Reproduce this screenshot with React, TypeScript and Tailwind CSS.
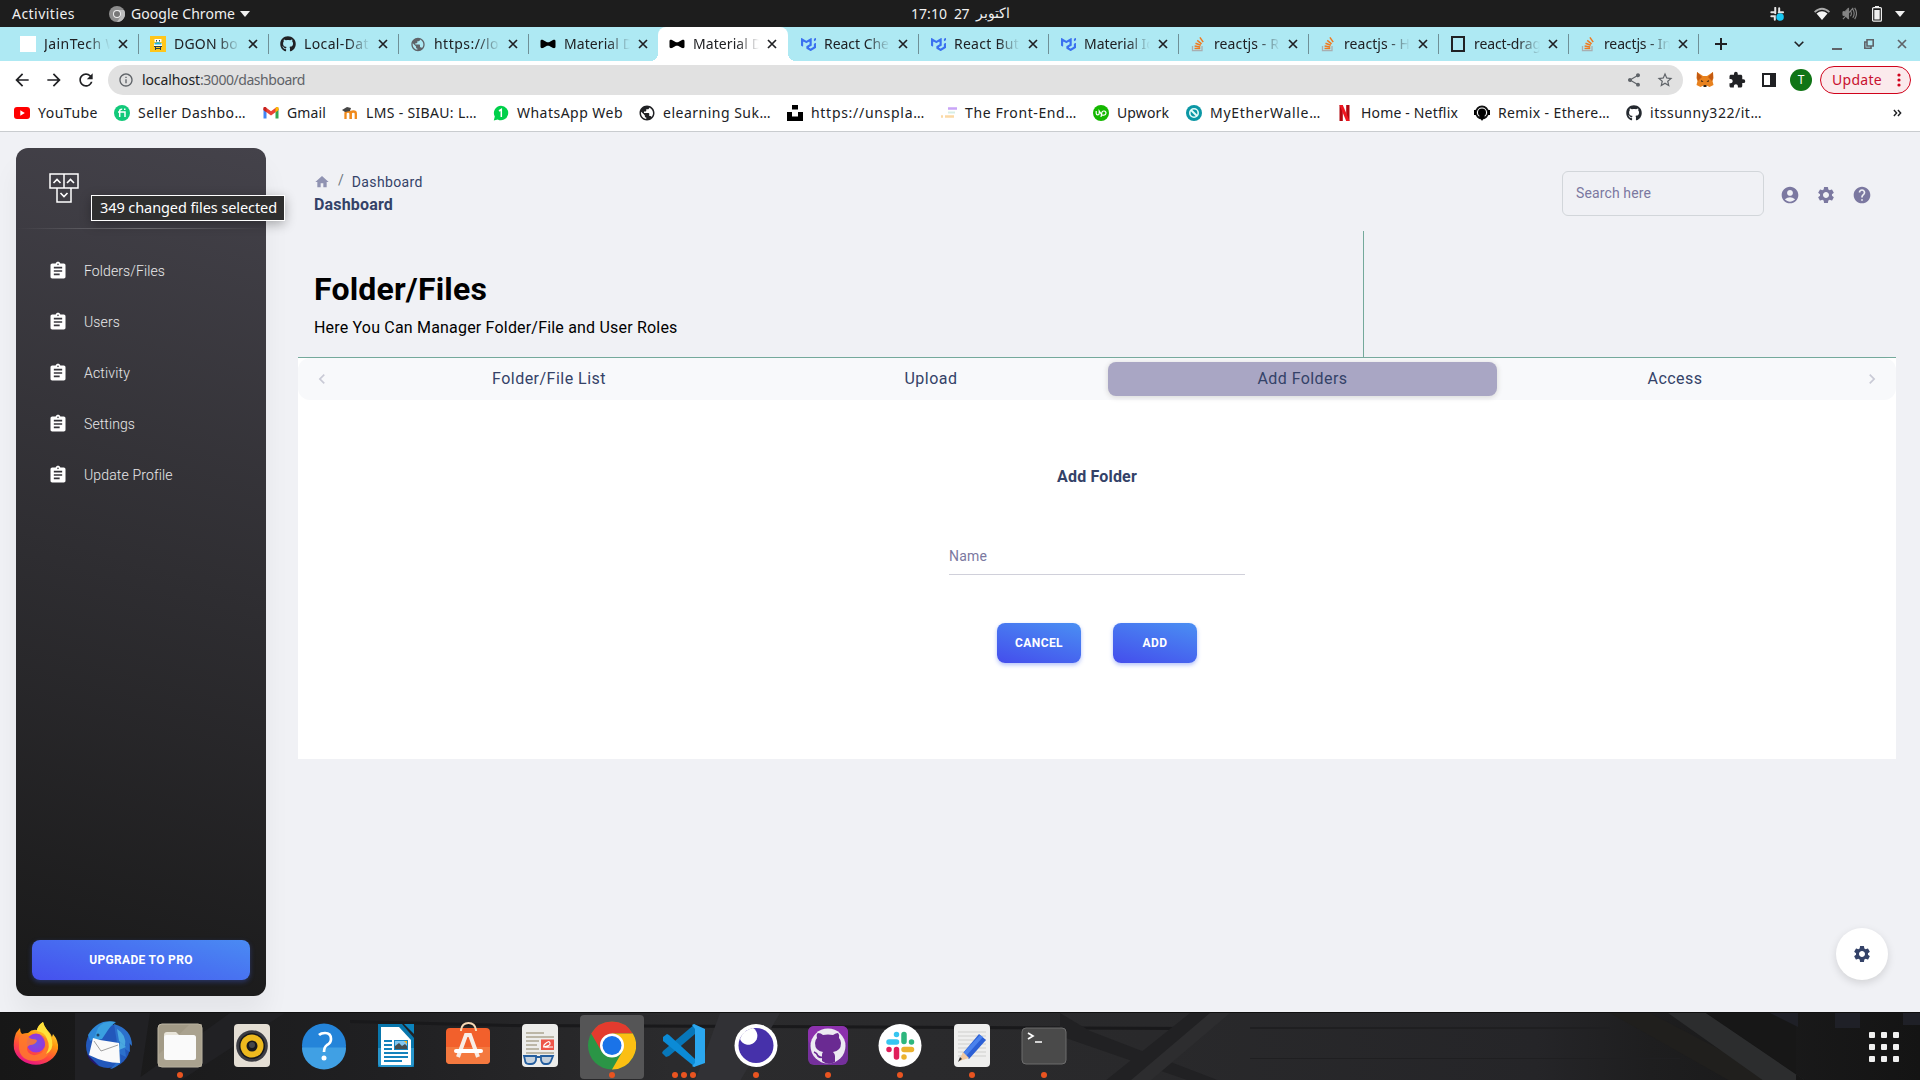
import React, { useLayoutEffect, useRef, useState } from "react";
import {
  MdAssignment, MdHome, MdSettings, MdAccountCircle, MdHelp, MdExtension, MdShare, MdStarBorder,
  MdKeyboardArrowLeft, MdKeyboardArrowRight, MdPublic, MdInfoOutline, MdArrowBack, MdArrowForward, MdRefresh,
} from "react-icons/md";
import { FaGithub } from "react-icons/fa";
import { SiMui } from "react-icons/si";

/** Text spread over a given width by adjusting its letter spacing. */
function Fit({ text, w, className = "" }: { text: string; w: number; className?: string }) {
  const ref = useRef<HTMLSpanElement>(null);
  const [ls, setLs] = useState(0);
  useLayoutEffect(() => {
    const el = ref.current;
    if (el) setLs((w - el.getBoundingClientRect().width) / text.length);
  }, [text, w]);
  return (
    <span ref={ref} className={`inline-block whitespace-pre ${className}`} style={{ letterSpacing: ls }}>
      {text}
    </span>
  );
}

function BowTie() {
  return <svg viewBox="0 0 16 16" className="size-4"><path d="M.5 5.2C.5 4 1.6 3.6 3 4l4 2.2h2L13 4c1.400-.4 2.500 0 2.500 1.200v5.600c0 1.200-1.100 1.600-2.500 1.200L9 9.800H7L3 12c-1.400.4-2.500 0-2.500-1.200z" /></svg>;
}
function MiniGame() {
  return (
    <svg viewBox="0 0 16 16" className="size-4">
      <rect width="16" height="16" fill="#ffc61a" />
      <path d="M4.500 3h7v3h-7z" fill="#fff" /><path d="M4 7h8v3H4z" fill="#fff" /><path d="M4.500 7l3.500-1 3.500 1v1.500h-7z" fill="#27b4d8" /><path d="M6 4h1v1.500H6zM9 4h1v1.500H9zM4 10h8v1H4zM5 12h6v1H5zM5 11h1v3H5zM10 11h1v3h-1z" fill="#26404c" />
    </svg>
  );
}
const Mui = () => <SiMui className="size-[15px] text-[#3a70f0]" />;
const Stack = () => (
  <svg viewBox="0 0 16 16" className="size-4" fill="none">
    <path d="M2.500 10v4.700h9.500V10" stroke="#a9aeb0" strokeWidth="1.300" />
    <path d="M4.500 12.600h5.800M4.600 10.100l5.700.8M5.500 7.200l5.300 2.100M7.200 4.300l4.400 3.500M9.900 1.400l3.300 4.700" stroke="#ee7a20" strokeWidth="1.500" />
  </svg>
);

const tabs: { t: string; w: number; i: React.ReactNode; active?: boolean; sep?: boolean }[] = [
  { t: "JainTech W", w: 75, i: <span className="block size-4 bg-white" />, sep: true },
  { t: "DGON bo", w: 64, i: <MiniGame />, sep: true },
  { t: "Local-Dat", w: 65, i: <FaGithub className="size-4" />, sep: true },
  { t: "https://lo", w: 65, i: <MdPublic className="size-[17px] text-[#5f6368]" />, sep: true },
  { t: "Material D", w: 69, i: <BowTie /> },
  { t: "Material D", w: 69, i: <BowTie />, active: true },
  { t: "React Che", w: 65, i: <Mui />, sep: true },
  { t: "React But", w: 65, i: <Mui />, sep: true },
  { t: "Material Ic", w: 69, i: <Mui />, sep: true },
  { t: "reactjs - R", w: 65, i: <Stack />, sep: true },
  { t: "reactjs - H", w: 66, i: <Stack />, sep: true },
  { t: "react-drag", w: 67, i: <span className="block h-4 w-[14px] border-2 border-[#202124]" />, sep: true },
  { t: "reactjs - In", w: 67, i: <Stack />, sep: true },
];

function Cross({ className = "" }: { className?: string }) {
  return <svg viewBox="0 0 10 10" className={className}><path d="M1 1l8 8M9 1L1 9" stroke="currentColor" strokeWidth="1.700" /></svg>;
}

const bookmarks: { t: string; w: number; gap: number; i: React.ReactNode }[] = [
  { t: "YouTube", w: 60, gap: 16, i: <svg viewBox="0 0 16 16" className="size-4"><rect y="2" width="16" height="12" rx="3" fill="#f00" /><path d="M6.300 5.300v5.400L10.800 8z" fill="#fff" /></svg> },
  { t: "Seller Dashbo…", w: 108, gap: 17, i: <svg viewBox="0 0 16 16" className="size-4"><circle cx="8" cy="8" r="8" fill="#12c97a" /><path d="M4 7h7v5M5.700 12V6q0-2 2.500-1.700M10 4.300h1.500" fill="none" stroke="#fff" strokeWidth="1.500" /></svg> },
  { t: "Gmail", w: 39, gap: 16, i: <svg viewBox="0 0 16 16" className="size-4"><path d="M.5 4v9.500h3V6z" fill="#4285f4" /><path d="M12.500 6v7.500h3V4z" fill="#34a853" /><path d="M.5 3.500C.5 2 2 1.800 3 2.500l5 3.800 5-3.800c1-.7 2.500-.5 2.500 1V5L8 10.500.5 5z" fill="#ea4335" /><path d="M12.500 3l.5-.5c1-.7 2.500-.5 2.500 1V5l-3 2.200z" fill="#fbbc04" /><path d="M3.500 3L3 2.500c-1-.7-2.500-.5-2.500 1V5l3 2.200z" fill="#c5221f" /></svg> },
  { t: "LMS - SIBAU: L…", w: 111, gap: 16, i: <svg viewBox="0 0 16 16" className="size-4"><path d="M3.500 14V8.500q0-2 2.500-2t2.500 2V14M8.800 14V8.500q0-2 2.500-2t2.500 2V14" fill="none" stroke="#f08a1c" strokeWidth="2.300" /><path d="M0 5l5-3 4 1-1 3-5 1z" fill="#464646" /></svg> },
  { t: "WhatsApp Web", w: 106, gap: 16, i: <svg viewBox="0 0 16 16" className="size-4"><path d="M8 .8a7.200 7.200 0 1 1-3.300 13.600L.8 15.400l1-3.800A7.200 7.200 0 0 1 8 .8z" fill="#00d04a" /><path d="M6 6l2.300-1.500V12" stroke="#fff" strokeWidth="1.500" fill="none" /></svg> },
  { t: "elearning Suk…", w: 108, gap: 16, i: <MdPublic className="size-[18px] shrink-0" /> },
  { t: "https://unspla…", w: 114, gap: 16, i: <svg viewBox="0 0 16 16" className="size-4"><path d="M5 0h6v4.500H5zM0 7h5v4.500h6V7h5v9H0z" /></svg> },
  { t: "The Front-End…", w: 112, gap: 16, i: <svg viewBox="0 0 16 16" className="size-4"><path d="M7 3.500h9" stroke="#c9a5f7" strokeWidth="2.500" /><path d="M7 7.500h7" stroke="#d6eee6" strokeWidth="2" /><path d="M4 11.500h9M0 11.500h2" stroke="#fbd9a5" strokeWidth="2.500" /></svg> },
  { t: "Upwork", w: 52, gap: 17, i: <svg viewBox="0 0 16 16" className="size-4"><circle cx="8" cy="8" r="8" fill="#14b800" /><path d="M3.200 6v2.200c0 2.200 3 2.200 3 0V6l2 3q1 1.500 2.600 1.200a2.100 2.100 0 1 0-2-2.500L8 12" fill="none" stroke="#fff" strokeWidth="1.200" /></svg> },
  { t: "MyEtherWalle…", w: 111, gap: 16, i: <svg viewBox="0 0 16 16" className="size-4"><circle cx="8" cy="8" r="8" fill="#0b97a5" /><circle cx="8" cy="8" r="4.200" fill="none" stroke="#e6fbfa" strokeWidth="1.600" /><path d="M5 5l6 6" stroke="#e6fbfa" strokeWidth="2" /></svg> },
  { t: "Home - Netflix", w: 97, gap: 16, i: <svg viewBox="0 0 16 16" className="size-4"><path d="M2.500 0h3.300v16H2.500zM9.200 0h3.300v16H9.200z" fill="#b1060f" /><path d="M2.500 0h3.300l6.700 16H9.200z" fill="#f01620" /></svg> },
  { t: "Remix - Ethere…", w: 112, gap: 16, i: <svg viewBox="0 0 16 16" className="size-4"><circle cx="8" cy="7.500" r="6" fill="none" stroke="#111" strokeWidth="1.800" /><circle cx="8" cy="7.500" r="4" /><path d="M0 5h2v5H0zM14 5h2v5h-2zM5 11h6l-3 5z" /></svg> },
  { t: "itssunny322/it…", w: 112, gap: 0, i: <FaGithub className="size-4 text-[#24292f]" /> },
];

const navItems: [string, number][] = [["Folders/Files", 81], ["Users", 36], ["Activity", 46], ["Settings", 51], ["Update Profile", 88.5]];

function TopBar() {
  return (
    <div className="grid h-[27px] grid-cols-3 items-center bg-[#1d1d1d] text-[14px] text-[#f0f0f0]">
      <div className="flex items-center">
        <Fit text="Activities" w={63} className="ml-3" />
        <svg viewBox="0 0 16 16" className="ml-[34px] size-4">
          <circle cx="8" cy="8" r="8" fill="#8d8d8d" /><path d="M8 4h7A8 8 0 0 1 8 16l4-6z" fill="#bcbcbc" /><circle cx="8" cy="8" r="4" fill="#eee" /><circle cx="8" cy="8" r="3" fill="#777" />
        </svg>
        <Fit text="Google Chrome" w={104} className="ml-[6px]" />
        <svg viewBox="0 0 10 6" className="ml-[5px] h-[6px] w-[10px]"><path d="M0 0h10L5 6z" fill="#f0f0f0" /></svg>
      </div>
      <div className="-mt-px flex items-center justify-center gap-[7px] pl-px">
        <Fit text="17:10" w={36} /><Fit text="27" w={15} /><span className="text-[13.500px]" dir="rtl">اکتوبر</span>
      </div>
      <div className="flex items-center justify-end pr-[15px]">
        <svg viewBox="0 0 16 16" className="mr-[30px] size-[14px]">
          <path d="M6 1v6M1.500 6h4M10.500 1.500v4M10 6h5M1.500 10.500h4v4" stroke="#e4e4e4" strokeWidth="2.300" strokeLinecap="round" fill="none" /><circle cx="11.500" cy="11.500" r="4.300" fill="#19c7f2" />
        </svg>
        <svg viewBox="0 0 16 14" className="mr-[12px] h-[14px] w-4"><path d="M0 4.500Q8-3 16 4.500l-1.200 1.300Q8-.2 1.200 5.800z" fill="#aaa" /><path d="M2.500 6.500Q8 2 13.500 6.500L8 13z" fill="#f4f4f4" /></svg>
        <svg viewBox="0 0 16 16" className="mr-[15px] size-[15px]" fill="none" stroke="#858585"><path d="M1 6h2l4-4v12l-4-4H1z" fill="#858585" /><path d="M9 5q2 3 0 6M11.500 3.500q3 4.500 0 9M13.500 2q4 6 0 12M1 14L12 2" strokeWidth="1.200" /></svg>
        <svg viewBox="0 0 10 16" className="mr-[13px] h-4 w-[10px]"><path d="M3 0h4v2H3z" fill="#eee" /><rect x=".6" y="1.600" width="8.800" height="13.600" rx="1" fill="none" stroke="#eee" strokeWidth="1.200" /><rect x="2.300" y="4" width="5.400" height="9.500" fill="#eee" /></svg>
        <svg viewBox="0 0 10 6" className="h-[6px] w-[10px]"><path d="M0 0h10L5 6z" fill="#f0f0f0" /></svg>
      </div>
    </div>
  );
}

function TabStrip() {
  return (
    <div className="flex h-[34px] bg-[#aee9f3] pl-[9px] text-[14px] text-[#202124]">
      {tabs.map((tab, k) => (
        <div key={k} className={`relative flex h-full w-[130px] shrink-0 items-center pl-[11px] ${tab.active ? "-ml-px mr-px rounded-t-lg bg-white" : ""}`}>
          {tab.active && (
            <>
              <span className="absolute bottom-0 -left-2 size-2 bg-[radial-gradient(circle_at_0_0,transparent_8px,white_8px)]" />
              <span className="absolute -right-2 bottom-0 size-2 bg-[radial-gradient(circle_at_100%_0,transparent_8px,white_8px)]" />
            </>
          )}
          <span className="flex w-4 shrink-0 justify-center">{tab.i}</span>
          <span className="-mt-[2px] ml-2 flex w-[66px] shrink-0 overflow-hidden [mask-image:linear-gradient(to_right,black_66%,transparent)]">
            <Fit text={tab.t} w={tab.w} className="shrink-0" />
          </span>
          <Cross className="ml-2 size-[10px]" />
          {tab.sep && <span className="absolute top-[7px] right-0 h-5 w-px bg-[#6f9097]" />}
        </div>
      ))}
      <div className="flex flex-1 items-center text-[#202124]">
        <svg viewBox="0 0 12 12" className="ml-[16px] size-3"><path d="M6 0v12M0 6h12" stroke="currentColor" strokeWidth="2" /></svg>
        <svg viewBox="0 0 10 6" className="ml-[67px] h-[6px] w-[10px]"><path d="M.7.7L5 5 9.300.7" fill="none" stroke="currentColor" strokeWidth="1.600" /></svg>
        <span className="mt-[9px] ml-[28px] h-[2px] w-[10px] bg-[#5f6368]" />
        <svg viewBox="0 0 10 10" className="ml-[22px] size-[10px]" fill="none" stroke="#5f6368" strokeWidth="1.600"><path d="M3 .8h6.200V7H3zM3 3H.8v6.200H7V7" /></svg>
        <Cross className="ml-[23px] size-[10px] text-[#5f6368]" />
      </div>
    </div>
  );
}

function Toolbar() {
  return (
    <div className="flex h-[38px] items-center bg-white text-[#202124]">
      <MdArrowBack className="ml-3 size-5" />
      <MdArrowForward className="ml-3 size-5" />
      <MdRefresh className="ml-[12px] size-5" />
      <div className="ml-[12px] flex h-[30px] w-[1575px] items-center rounded-full bg-[#e1e1e1] pl-[10px] text-[14px]">
        <MdInfoOutline className="size-4 text-[#5f6368]" />
        <Fit text="localhost" w={58} className="-mt-[2px] ml-2" />
        <Fit text=":3000/dashboard" w={105} className="-mt-[2px] text-[#5f6368]" />
        <MdShare className="ml-auto size-4 text-[#5f6368]" />
        <MdStarBorder className="mr-[9px] ml-[14px] size-[18px] text-[#5f6368]" />
      </div>
      <svg viewBox="0 0 18 16" className="ml-[13px] h-4 w-[18px]">
        <path d="M1 0l6 4h4l6-4 .5 6-1 3 1 4-4 2-3-1.500H7.500L4.500 15l-4-2 1-4-1-3z" fill="#e8821e" /><path d="M1 0l5 5-4 4-1-3zM17 0l-5 5 4 4 1-3z" fill="#c35a12" /><path d="M5 8l2.500 1.500-2 .5zM13 8l-2.500 1.500 2 .5zM7.500 13h3v2h-3z" fill="#2c2014" />
      </svg>
      <MdExtension className="ml-[14px] size-[18px]" />
      <svg viewBox="0 0 14 14" className="ml-[16px] size-[14px]"><path d="M0 0h14v14H0zM2 2v10h6V2z" fillRule="evenodd" fill="#202124" /></svg>
      <span className="ml-[14px] flex size-[22px] items-center justify-center rounded-full bg-[#107516] text-[12px] text-white">T</span>
      <div className="ml-[8px] flex h-[28px] w-[91px] items-center rounded-full border border-[#d0021b] bg-[#fbeaec] pl-[11px] text-[14px] text-[#c8102e]">
        <Fit text="Update" w={50} className="-mt-px" />
        <svg viewBox="0 0 4 16" className="ml-[15px] h-4 w-1" fill="#d0021b"><circle cx="2" cy="3" r="1.600" /><circle cx="2" cy="8" r="1.600" /><circle cx="2" cy="13" r="1.600" /></svg>
      </div>
    </div>
  );
}

function Bookmarks() {
  return (
    <div className="flex h-[33px] items-center border-b border-[#c9cccf] bg-white pb-[5px] pl-[14px] text-[14px] text-[#202124]">
      {bookmarks.map((b) => (
        <div key={b.t} className="flex shrink-0 items-center">
          <span className="flex w-4 shrink-0 justify-center">{b.i}</span>
          <Fit text={b.t} w={b.w} className="-mt-px ml-2" />
          <span className="shrink-0" style={{ width: b.gap }} />
        </div>
      ))}
      <svg viewBox="0 0 10 8" className="mr-[18px] ml-auto h-2 w-[9px]" fill="none" stroke="#202124" strokeWidth="1.600"><path d="M1 .7L4 4 1 7.300M5.500.7l3 3.300-3 3.300" /></svg>
    </div>
  );
}

function Sidebar() {
  return (
    <aside className="relative ml-4 mt-4 flex h-[848px] w-[250px] shrink-0 flex-col rounded-xl bg-[linear-gradient(195deg,#44424a,#191919)] shadow-[0_20px_27px_0_rgba(0,0,0,0.05)]">
      <svg viewBox="0 0 30 30" className="mt-[25px] ml-[33px] size-[30px]" fill="none" stroke="#fff" strokeWidth="1.500">
        <path d="M1 1h14v14H1zM15 1h14v14H15zM8 15h14v14H8z" /><path d="M4.500 10l3.500-3.500 3.500 3.500M18 10l3.500-3.500 3.500 3.500M11.500 20l3.500 3.500 3.500-3.500" strokeWidth="1.600" />
      </svg>
      <div className="mt-[25px] h-px bg-[linear-gradient(to_right,transparent,rgba(255,255,255,0.28),transparent)]" />
      <nav className="mt-[17px] flex flex-col">
        {navItems.map(([t, w]) => (
          <div key={t} className="flex h-[51px] items-center pl-8">
            <MdAssignment className="-mt-px size-5 text-white" />
            <Fit text={t} w={w} className="ml-4 font-['Roboto'] text-[14px] font-light text-white/90" />
          </div>
        ))}
      </nav>
      <button className="mx-4 mt-auto mb-4 h-10 rounded-lg bg-[linear-gradient(195deg,#4a8bf3,#4550ee)] text-[12px] font-bold text-white shadow-[0_2px_5px_rgba(66,100,240,0.35)]">
        <Fit text="UPGRADE TO PRO" w={103.5} />
      </button>
      <div className="absolute top-[47px] left-[75px] flex h-[26px] w-[194px] items-center justify-center border border-white bg-[#2f2f2f] font-['Noto_Sans'] text-[14.500px] text-white shadow-[0_3px_12px_rgba(0,0,0,0.3)]">
        <Fit text="349 changed files selected" w={178} className="pl-px" />
      </div>
    </aside>
  );
}

function GradButton({ t, w }: { t: string; w: number }) {
  return (
    <button className="h-10 w-[84px] rounded-lg bg-[linear-gradient(195deg,#4a8ff3,#444dec)] text-[12px] font-bold text-white shadow-[0_2px_4px_rgba(66,100,240,0.4)]">
      <Fit text={t} w={w} />
    </button>
  );
}

function Main() {
  return (
    <main className="ml-8 flex w-[1598px] shrink-0 flex-col">
      <div className="flex h-[99px]">
        <div className="pt-[38px] pl-4">
          <div className="flex h-6 items-center text-[#344268]">
            <MdHome className="-mt-px size-4 text-[#9093b2]" />
            <span className="ml-[8px] -mt-1 text-[14px] text-[#6c757d]">/</span>
            <Fit text="Dashboard" w={71} className="ml-[8px] text-[14px]" />
          </div>
          <div className="-mt-px text-[16px] leading-6 font-bold text-[#344268]"><Fit text="Dashboard" w={79} /></div>
        </div>
        <div className="ml-auto flex items-start pt-[39px] pr-[24px] text-[#7b78a0]">
          <div className="flex h-[45px] w-[202px] items-center rounded-md border border-[#d2d6da] pl-[13px] text-[14px]"><Fit text="Search here" w={75} /></div>
          <MdAccountCircle className="mt-[14px] ml-4 size-5" />
          <MdSettings className="mt-[14px] ml-4 size-5" />
          <MdHelp className="mt-[14px] ml-4 size-5" />
        </div>
      </div>
      <div className="flex h-[127px] border-b border-[#74a99b] text-black">
        <div className="w-[1066px] border-r border-[#74a99b] pt-[38px] pl-4">
          <div className="text-[32px] leading-10 font-bold"><Fit text="Folder/Files" w={173} /></div>
          <div className="mt-[7px] text-[16px] leading-6"><Fit text="Here You Can Manager Folder/File and User Roles" w={363.5} /></div>
        </div>
      </div>
      <section className="h-[401px] bg-white text-[#344268]">
        <div className="flex h-[42px] items-center rounded-xl bg-[#f8f9fb] text-[16px]">
          <MdKeyboardArrowLeft className="ml-[14px] size-5 text-[#c9cad6]" />
          <div className="ml-[23px] flex w-[388px] justify-center"><Fit text="Folder/File List" w={114} /></div>
          <div className="flex w-[365px] justify-center"><Fit text="Upload" w={53} className="ml-[11px]" /></div>
          <div className="-mt-px flex h-[34px] w-[389px] items-center justify-center rounded-lg bg-[#a9a6c4] shadow-[0_1px_5px_1px_#ddd]"><Fit text="Add Folders" w={90} /></div>
          <div className="flex w-[356px] justify-center"><Fit text="Access" w={55} /></div>
          <MdKeyboardArrowRight className="mr-[14px] ml-auto size-5 text-[#c9cad6]" />
        </div>
        <div className="flex flex-col items-center">
          <h2 className="mt-[65px] text-[16px] leading-6 font-bold"><Fit text="Add Folder" w={80} /></h2>
          <div className="mt-[55px] flex h-[31px] w-[296px] items-start border-b border-[#d0d0da] text-[14px] text-[#7b78a0]"><Fit text="Name" w={38} className="leading-6" /></div>
          <div className="mt-[48px] flex gap-8"><GradButton t="CANCEL" w={48} /><GradButton t="ADD" w={25} /></div>
        </div>
      </section>
      <div className="mt-auto mr-2 mb-8 flex size-[52px] items-center justify-center self-end rounded-full bg-white shadow-[0_3px_8px_rgba(0,0,0,0.13)]">
        <MdSettings className="size-5 text-[#344268]" />
      </div>
    </main>
  );
}

const dock: { n: number; active?: boolean; i: React.ReactNode }[] = [
  { n: 0, i: <>
    <defs>
      <linearGradient id="fx" x1=".8" y1="0" x2=".3" y2="1"><stop offset="0" stopColor="#fff44f" /><stop offset=".4" stopColor="#ff980e" /><stop offset=".7" stopColor="#ff4a3d" /><stop offset="1" stopColor="#e5108c" /></linearGradient>
      <radialGradient id="fxp"><stop offset="0" stopColor="#6a55e8" /><stop offset="1" stopColor="#9a35d8" /></radialGradient>
    </defs>
    <path d="M4 12l4-5q0 4 2 6 3-1 6-1 4-4 9-3Q26 4 31 1q1 5 6 10 2 2 3 5l1-3q6 7 5 15a22.500 20 0 0 1-44 0q-1-8 2-16z" fill="url(#fx)" />
    <circle cx="24" cy="22" r="9.500" fill="url(#fxp)" />
    <path d="M7 17q3-4 8-4 1 4 5 5 5 0 5 2-2 4-7 4-5 2-2 7 4 5 11 2 6-2 6-9 0-7-5-10 9 2 10 11 0 14-15 15Q9 40 7 28z" fill="#ff7a2c" opacity=".85" />
    <path d="M31 1q-6 4-6 9 8 1 10 8 4 8-1 15 8-4 6-14-2-6-5-10-3-4-4-8z" fill="#ffe03a" /></> },
  { n: 0, i: <>
    <circle cx="24" cy="25" r="22" fill="#2258bb" /><path d="M4 14Q14-3 32 1L16 15 6 20z" fill="#2d88d8" /><path d="M30 3q18 5 18 22l-3-3 1 9-5-3 1 8-6-3 1 8q-6 7-11 7 8-6 9-14z" fill="#2b70cc" /><path d="M33 8q10 6 8 17l-6-5zM36 21l6 5-7 3z" fill="#4aa8e0" /><path d="M14 7Q20-1 31 1q-5 4-7 8l-6 9-9 2z" fill="#3aa0e0" /><path d="M9 17l7 2 19 3 1 20q-15 0-31-8z" fill="#fafafa" /><path d="M10 20l7 10 17-6" fill="none" stroke="#888" strokeWidth=".8" /><path d="M3 33l12 12q-10-4-12-12z" fill="#23156a" /><circle cx="14" cy="14" r="1.500" fill="#246" /></> },
  { n: 1, i: <><rect x="2" y="3" width="44" height="43" rx="4" fill="#a29a86" stroke="#bdb6a3" /><path d="M2 34L34 3h12v43H2z" fill="#b2aa97" opacity=".5" /><path d="M8 14q0-3 3-3h9l4 4v6H8z" fill="#e8e4d9" /><rect x="8" y="14" width="32" height="25" rx="2.500" fill="#fafafa" /></> },
  { n: 0, i: <><rect x="6" y="3" width="36" height="43" rx="4" fill="#e4ded4" /><circle cx="24" cy="25" r="15.800" fill="#3b3c43" /><circle cx="24" cy="25" r="13" fill="#16171c" /><circle cx="24" cy="25" r="11.500" fill="#edb91e" /><circle cx="24" cy="25" r="5.500" fill="#17181b" /><circle cx="24" cy="24" r="3" fill="#44464a" /></> },
  { n: 0, i: <><circle cx="24" cy="24.500" r="22" fill="#2484d9" /><path d="M2 26.500h44a22 22 0 0 1-44 0z" fill="#40a0e4" /><path d="M19 14q2-2 6-2 6 0 6 6 0 4-4 6-3 2-3 7" fill="none" stroke="#fff" strokeWidth="2.700" /><circle cx="24" cy="37" r="2.500" fill="#fff" /></> },
  { n: 0, i: <><path d="M6 3h24l12 14v29H6z" fill="#0876ac" /><path d="M6 27h36v15q0 4-4 4H10q-4 0-4-4z" fill="#2795cb" /><path d="M32 3h10v10z" fill="#0b83bd" /><path d="M9 6h18l12 13v25H9z" fill="#fff" /><path d="M12 20h8M12 24h8M12 28h8M12 32h24M12 36h24M12 40h18" stroke="#1582bc" strokeWidth="2" /><path d="M22 19h14v10H22z" fill="#1684c0" /><path d="M23 20h12v8H23z" fill="#83c6ef" /><path d="M23 28v-3l4-3 3 3 3-2 2 2v3z" fill="#474e50" /><path d="M32 20h3v3z" fill="#ffb51d" /></> },
  { n: 0, i: <><rect x="2" y="7" width="44" height="36" rx="4" fill="#f2602c" /><path d="M2 26h44v13q0 4-4 4H6q-4 0-4-4z" fill="#f4793f" /><path d="M17 10V9q1-7 7.500-7T32 9v1" fill="none" stroke="#f6d8b4" strokeWidth="2" /><path d="M14 36l8-22h4l8 22" fill="none" stroke="#f8ede6" strokeWidth="4" /><path d="M12 30h25" stroke="#fff" strokeWidth="4" strokeLinecap="round" /></> },
  { n: 0, i: <><rect x="6" y="3" width="36" height="43" rx="4" fill="#ededeb" /><path d="M10 12h18M10 16h28M10 20h13M10 24h11M10 28h13M10 32h28" stroke="#bcb7a7" strokeWidth="1.800" /><rect x="25" y="18.500" width="13" height="10.500" fill="#ee5549" /><path d="M27 26q8-1 7-4t-5 1 5 3h3" fill="none" stroke="#fff" strokeWidth="1.200" /><path d="M8 35h12v4q-1 4-5 4h-2q-4 0-4-4zM25 35h12l-2 5q-1 3-4 3h-2q-3 0-4-4zM20 36h5" fill="#b9c8d8" fillOpacity=".8" stroke="#245e9f" strokeWidth="1.800" /></> },
  { n: 1, active: true, i: <><circle cx="24" cy="24.500" r="24" fill="#2b9546" /><path d="M3.200 12.500A24 24 0 0 1 44.800 12.500H24L13.600 30.500z" fill="#e33b2e" /><path d="M44.800 12.500A24 24 0 0 1 24 48.500L34.400 30.500 24 12.500z" fill="#fbbf13" /><circle cx="24" cy="24.500" r="12" fill="#fff" /><circle cx="24" cy="24.500" r="9.500" fill="#1a73e8" /></> },
  { n: 3, i: <><path d="M35 3L3 30l-1 2 4 4 3-1 26-22z" fill="#0877b9" /><path d="M3 16l4-3 2 1 26 24v8L3 20z" fill="#0b8bd6" /><path d="M34 3l11 5v34l-11 4-2-1 3-3V8l-3-4z" fill="#2ba7ef" /></> },
  { n: 1, i: <><circle cx="24" cy="24.500" r="21.500" fill="#fff" /><circle cx="24" cy="24.500" r="17.500" fill="#4631aa" /><path d="M8 18q3-9 13-11a9 9 0 1 1-13 11z" fill="#fff" /></> },
  { n: 1, i: <><rect x="4" y="5" width="40" height="39" rx="6" fill="#75309c" /><rect x="4" y="5" width="40" height="19" rx="6" fill="#8c31ad" /><circle cx="24" cy="25" r="17.500" fill="#eceaf2" /><path d="M18 40v-6q0-2 1-3-8-1-8-9 0-3 2-5-1-4 1-5 3 0 5 2 5-1 10 0 3-2 5-2 2 2 1 5 2 2 2 5 0 8-8 9 2 2 2 4v6q-7 4-13-1z" fill="#6a2a92" /><path d="M10 31q3 1 4 4 2 2 5 1" fill="none" stroke="#6a2a92" strokeWidth="1.800" /></> },
  { n: 1, i: <><circle cx="24" cy="24.500" r="21.500" fill="#fff" /><g fill="none" strokeWidth="5.500" strokeLinecap="round"><path d="M20.500 13.500v0M13 21h7.500" stroke="#36c5f0" /><path d="M28 13.500v7M35.500 21v0" stroke="#2eb67d" /><path d="M28 36v0M28 28.500h7.500" stroke="#ecb22e" /><path d="M20.500 28.500V36M13 28.500v0" stroke="#e01e5a" /></g></> },
  { n: 1, i: <><rect x="6" y="3" width="36" height="43" rx="4" fill="#efefee" /><path d="M10 11h28M10 15h28M10 19h28M10 23h28M10 27h28M10 31h28M10 35h28" stroke="#cfcfcd" /><path d="M31 13l7 6-17 19-6-6z" fill="#2b5fd5" /><path d="M32 14l3 2-17 19-3-3z" fill="#4b82ed" /><path d="M15 31l6 6-10 3z" fill="#f1c8a1" /><path d="M12 36l2 2-4 3z" fill="#333" /></> },
  { n: 1, i: <><rect x="2" y="7" width="44" height="36" rx="4" fill="#4a4a4a" stroke="#6d6d6d" /><path d="M8 12l5 3-5 3M15 21h7" fill="none" stroke="#fff" strokeWidth="1.700" /></> },
];

function Dock() {
  return (
    <footer className="relative flex h-[68px] items-center overflow-hidden border-t border-[#101010] bg-[#19191b]">
      <svg viewBox="0 0 1920 68" className="absolute inset-0 h-[68px] w-[1920px]" preserveAspectRatio="none">
        <defs><linearGradient id="wood"><stop offset="0" stopColor="#171717" /><stop offset=".2" stopColor="#202022" /><stop offset=".35" stopColor="#2b2b2d" /><stop offset=".6" stopColor="#29292b" /><stop offset=".8" stopColor="#252528" /><stop offset=".86" stopColor="#1e1e1f" /><stop offset="1" stopColor="#141414" /></linearGradient></defs>
        <path d="M0 0h1920v68H0z" fill="url(#wood)" />
        <path d="M350 7l160 4 680 3v3L510 14l-160-4z" fill="#19191b" />
        <path d="M75 0h75l-10 68H75zM230 0h55L180 68h-45z" fill="#212124" />
        <path d="M720 0h60l-40 68h-45z" fill="#313135" />
        <path d="M1060 0l30 18 130 50h-30l-130-45zM1220 0l-75 68h-40L1190 0z" fill="#212123" />
        <path d="M1230 0l-80 68h-20L1210 0z" fill="#2d2d2f" />
        <path d="M1250 14h360v2h-360zM1250 45h430v1h-430z" fill="#1f1f21" />
        <path d="M1610 0h40l130 68h-50z" fill="#201f1d" />
        <path d="M1668 0h38l100 68h-42z" fill="#2c2d2e" />
        <path d="M1706 0h90v68h10z" fill="#171717" /><path d="M1770 0h28v14zM1835 0h25v15h-25zM1903 0h17v12h-17z" fill="#1f2027" />
      </svg>
      {dock.map((d, k) => (
        <div key={k} className="relative flex h-[68px] w-[72px] items-center justify-center">
          {d.active && <span className="absolute top-[2px] left-1 h-16 w-16 rounded bg-[#555556]" />}
          <svg viewBox="0 0 48 49" className="relative -top-px h-[49px] w-12">{d.i}</svg>
          <span className="absolute bottom-[3px] left-0 flex w-full justify-center gap-[3px]">
            {Array.from({ length: d.n }, (_, j) => <span key={j} className="size-[6px] rounded-full bg-[#e95420]" />)}
          </span>
        </div>
      ))}
      <div className="relative mr-[21px] ml-auto grid grid-cols-3 gap-[6px]">
        {Array.from({ length: 9 }, (_, j) => <span key={j} className="size-[6px] rounded-[1px] bg-[#f0f0f0]" />)}
      </div>
    </footer>
  );
}

export default function App() {
  return (
    <div className="h-[1080px] w-[1920px] overflow-hidden bg-[#f0f1f5] font-['Noto_Sans',sans-serif]">
      <TopBar />
      <TabStrip />
      <Toolbar />
      <Bookmarks />
      <div className="flex h-[880px] font-['Roboto',sans-serif]">
        <Sidebar />
        <Main />
      </div>
      <Dock />
    </div>
  );
}
